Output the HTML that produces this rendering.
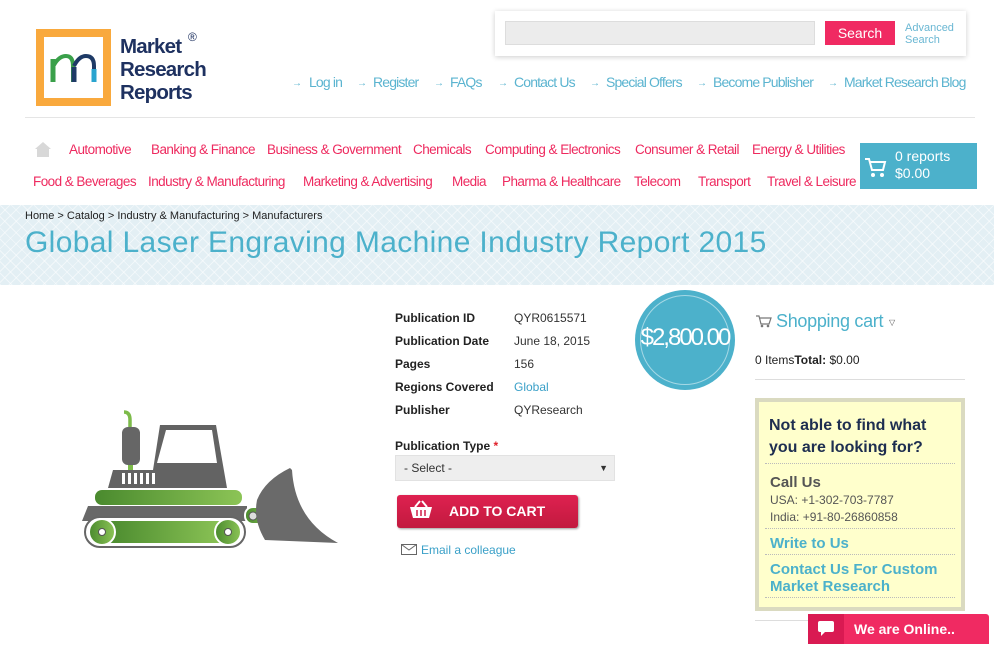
<!DOCTYPE html>
<html><head><meta charset="utf-8">
<style>
*{margin:0;padding:0;box-sizing:border-box}
body{width:994px;height:655px;overflow:hidden;background:#fff;font-family:"Liberation Sans",Arial,sans-serif;position:relative}
.a{position:absolute;white-space:nowrap}
.nav{font-size:13.5px;color:#ee2a5f;letter-spacing:-0.55px}
.tl{font-size:14px;color:#5bb4d0;letter-spacing:-0.85px}
.arr{font-size:10px;color:#5bb4d0}
.lbl{font-size:12px;font-weight:bold;color:#222}
.val{font-size:12px;color:#333}
</style></head><body>

<!-- logo -->
<div class="a" style="left:36px;top:29px;width:75px;height:77px;background:#f9a93d"></div>
<div class="a" style="left:44px;top:37px;width:59px;height:61px;background:#fff"></div>
<svg class="a" style="left:44px;top:37px" width="59" height="61" viewBox="0 0 59 61">
<path d="M9 22 V45" stroke="#3aa04a" stroke-width="5" fill="none"/>
<path d="M10 28 Q15 19 22 19 Q29 19 29 29 V45" stroke="#3aa04a" stroke-width="4" fill="none"/>
<path d="M30 29 Q35 19 42 19 Q50 19 50 29 V45" stroke="#1e3a66" stroke-width="4" fill="none"/>
<path d="M30 30 V45" stroke="#1e3a66" stroke-width="5" fill="none"/>
<path d="M50 32 V45" stroke="#2aa4cf" stroke-width="5" fill="none"/>
</svg>
<div class="a" style="left:120px;top:35px;font-size:20.5px;font-weight:900;color:#1e3160;line-height:23px;letter-spacing:-0.8px">Market<br>Research<br>Reports</div>
<div class="a" style="left:188px;top:30px;font-size:12px;color:#1e3160">®</div>

<!-- search box -->
<div class="a" style="left:495px;top:11px;width:471px;height:45px;background:#fff;box-shadow:0 1px 5px rgba(0,0,0,.2)"></div>
<div class="a" style="left:505px;top:21px;width:310px;height:24px;background:#ececec;border:1px solid #ddd"></div>
<div class="a" style="left:825px;top:21px;width:70px;height:24px;background:#f02a62;color:#fff;font-size:14px;text-align:center;line-height:24px">Search</div>
<div class="a" style="left:905px;top:22px;font-size:11px;color:#6ab7d3;line-height:12px">Advanced<br>Search</div>

<!-- top links -->
<span class="a arr" style="left:292px;top:78px">→</span><span class="a tl" style="left:309px;top:74px">Log in</span>
<span class="a arr" style="left:357px;top:78px">→</span><span class="a tl" style="left:373px;top:74px">Register</span>
<span class="a arr" style="left:434px;top:78px">→</span><span class="a tl" style="left:450px;top:74px">FAQs</span>
<span class="a arr" style="left:498px;top:78px">→</span><span class="a tl" style="left:514px;top:74px">Contact Us</span>
<span class="a arr" style="left:590px;top:78px">→</span><span class="a tl" style="left:606px;top:74px">Special Offers</span>
<span class="a arr" style="left:697px;top:78px">→</span><span class="a tl" style="left:713px;top:74px">Become Publisher</span>
<span class="a arr" style="left:828px;top:78px">→</span><span class="a tl" style="left:844px;top:74px">Market Research Blog</span>

<div class="a" style="left:25px;top:117px;width:950px;height:1px;background:#e5e5e5"></div>

<!-- home icon -->
<svg class="a" style="left:34px;top:141px" width="18" height="17"><path d="M9 1 L17 8 L15 8 L15 16 L3 16 L3 8 L1 8 Z" fill="#d8d8d8"/></svg>

<!-- nav row 1 -->
<span class="a nav" style="left:69px;top:142px">Automotive</span>
<span class="a nav" style="left:151px;top:142px">Banking &amp; Finance</span>
<span class="a nav" style="left:267px;top:142px">Business &amp; Government</span>
<span class="a nav" style="left:413px;top:142px">Chemicals</span>
<span class="a nav" style="left:485px;top:142px">Computing &amp; Electronics</span>
<span class="a nav" style="left:635px;top:142px">Consumer &amp; Retail</span>
<span class="a nav" style="left:752px;top:142px">Energy &amp; Utilities</span>
<!-- nav row 2 -->
<span class="a nav" style="left:33px;top:174px">Food &amp; Beverages</span>
<span class="a nav" style="left:148px;top:174px">Industry &amp; Manufacturing</span>
<span class="a nav" style="left:303px;top:174px">Marketing &amp; Advertising</span>
<span class="a nav" style="left:452px;top:174px">Media</span>
<span class="a nav" style="left:502px;top:174px">Pharma &amp; Healthcare</span>
<span class="a nav" style="left:634px;top:174px">Telecom</span>
<span class="a nav" style="left:698px;top:174px">Transport</span>
<span class="a nav" style="left:767px;top:174px">Travel &amp; Leisure</span>

<!-- cart box -->
<div class="a" style="left:860px;top:143px;width:117px;height:46px;background:#4cb1cb"></div>
<svg class="a" style="left:864px;top:155px" width="24" height="24"><path d="M1 4 H5 L8 15 H19 L21 7 H6" fill="none" stroke="#fff" stroke-width="2"/><circle cx="9" cy="20" r="2" fill="#fff"/><circle cx="18" cy="20" r="2" fill="#fff"/></svg>
<div class="a" style="left:895px;top:148px;color:#fff;font-size:14px;line-height:17px">0 reports<br>$0.00</div>

<!-- banner -->
<div class="a" style="left:0;top:205px;width:994px;height:80px;background-color:#e3eff4;background-image:repeating-linear-gradient(45deg,rgba(255,255,255,.5) 0 1px,transparent 1px 8px),repeating-linear-gradient(-45deg,rgba(255,255,255,.5) 0 1px,transparent 1px 8px)"></div>
<div class="a" style="left:25px;top:210px;font-size:11px;color:#222">Home &gt; Catalog &gt; Industry &amp; Manufacturing &gt; Manufacturers</div>
<div class="a" style="left:25px;top:226px;font-size:30px;color:#4cb1cb;letter-spacing:0.35px">Global Laser Engraving Machine Industry Report 2015</div>

<!-- bulldozer -->
<svg class="a" style="left:60px;top:390px" width="300" height="170" viewBox="0 0 300 170">
<defs><linearGradient id="g" x1="0" x2="1"><stop offset="0" stop-color="#4a8a2e"/><stop offset="1" stop-color="#8cc456"/></linearGradient></defs>
<path d="M64 22 Q70 22 70 30 L70 40" fill="none" stroke="#7dbb4a" stroke-width="3.5"/>
<rect x="62" y="37" width="18" height="38" rx="6" fill="#666"/>
<rect x="68" y="75" width="5" height="8" fill="#7dbb4a"/>
<path d="M53 80 L93 80 L100 35 L156 35 L167 98 L48 98 Z" fill="#636363"/>
<path d="M106 40 L152 40 L157 73 L97 73 Z" fill="#fff"/>
<g fill="#fff"><rect x="62" y="83" width="3" height="11"/><rect x="68" y="83" width="3" height="11"/><rect x="74" y="83" width="3" height="11"/><rect x="80" y="83" width="3" height="11"/><rect x="86" y="83" width="3" height="11"/><rect x="92" y="83" width="3" height="11"/></g>
<rect x="35" y="100" width="147" height="15" rx="7" fill="url(#g)"/>
<path d="M28 116 L187 116 L187 131 L22 131 Z" fill="#686868"/>
<rect x="25" y="127" width="160" height="30" rx="15" fill="#fff" stroke="#666" stroke-width="2"/>
<rect x="45" y="131" width="120" height="22" fill="url(#g)"/>
<circle cx="42" cy="142" r="13" fill="url(#g)" stroke="#fff" stroke-width="2"/><circle cx="42" cy="142" r="3.5" fill="#fff" stroke="#555"/>
<circle cx="168" cy="142" r="13" fill="url(#g)" stroke="#fff" stroke-width="2"/><circle cx="168" cy="142" r="3.5" fill="#fff" stroke="#555"/>
<rect x="185" y="117" width="30" height="17" rx="8" fill="url(#g)" stroke="#fff" stroke-width="2"/>
<circle cx="193" cy="126" r="4" fill="#ddd" stroke="#555"/><circle cx="207" cy="126" r="4" fill="#ddd" stroke="#555"/>
<path d="M230 78 L232 80 Q235 130 278 153 L205 150 Q193 130 197 110 Q205 90 230 78 Z" fill="#6a6a6a"/>
</svg>

<!-- details -->
<div class="a lbl" style="left:395px;top:311px">Publication ID</div><div class="a val" style="left:514px;top:311px">QYR0615571</div>
<div class="a lbl" style="left:395px;top:334px">Publication Date</div><div class="a val" style="left:514px;top:334px">June 18, 2015</div>
<div class="a lbl" style="left:395px;top:357px">Pages</div><div class="a val" style="left:514px;top:357px">156</div>
<div class="a lbl" style="left:395px;top:380px">Regions Covered</div><div class="a val" style="left:514px;top:380px;color:#3aa0c8">Global</div>
<div class="a lbl" style="left:395px;top:403px">Publisher</div><div class="a val" style="left:514px;top:403px">QYResearch</div>
<div class="a lbl" style="left:395px;top:439px">Publication Type <span style="color:#e0202a">*</span></div>
<div class="a" style="left:395px;top:455px;width:220px;height:26px;background:#eee;border:1px solid #e2e2e2;font-size:12px;color:#333;line-height:24px;padding-left:8px">- Select -<span style="position:absolute;right:6px;top:0;font-size:9px">▼</span></div>
<div class="a" style="left:397px;top:495px;width:181px;height:33px;background:linear-gradient(#de2150,#c21a3f);border-radius:3px;box-shadow:1px 1px 2px rgba(0,0,0,.4)"></div>
<svg class="a" style="left:408px;top:499px" width="26" height="22"><path d="M7 8 L12 2 M19 8 L14 2" stroke="#fff" stroke-width="2"/><path d="M2 8 H24 L21 19 H5 Z" fill="#fff"/><g stroke="#d01e48" stroke-width="1.5"><path d="M9 11 V17 M13 11 V17 M17 11 V17"/></g></svg>
<div class="a" style="left:449px;top:503px;font-size:14px;font-weight:bold;color:#fff">ADD TO CART</div>
<svg class="a" style="left:401px;top:544px" width="16" height="11"><rect x="0.5" y="0.5" width="15" height="10" fill="#fff" stroke="#666"/><path d="M0.5 0.5 L8 6 L15.5 0.5" fill="none" stroke="#666"/></svg>
<div class="a" style="left:421px;top:543px;font-size:12px;color:#3aa0c8">Email a colleague</div>

<!-- price circle -->
<div class="a" style="left:635px;top:290px;width:100px;height:100px;border-radius:50%;background:#4cb1cb"></div>
<div class="a" style="left:640px;top:295px;width:90px;height:90px;border-radius:50%;border:1px solid rgba(255,255,255,.5)"></div>
<div class="a" style="left:635px;top:324px;width:100px;text-align:center;color:#fff;font-size:24px;letter-spacing:-2px">$2,800.00</div>

<!-- shopping cart sidebar -->
<svg class="a" style="left:756px;top:314px" width="16" height="14"><path d="M0 2 H3 L5 10 H13 L15 4 H4" fill="none" stroke="#777" stroke-width="1.2"/><circle cx="6" cy="12" r="1.3" fill="#777"/><circle cx="12" cy="12" r="1.3" fill="#777"/></svg>
<div class="a" style="left:776px;top:311px;font-size:18px;color:#4cb1cb;letter-spacing:-0.3px">Shopping cart</div>
<div class="a" style="left:889px;top:318px;font-size:8px;color:#555">▽</div>
<div class="a" style="left:755px;top:353px;font-size:12px;color:#222">0 Items<b>Total:</b> $0.00</div>
<div class="a" style="left:755px;top:379px;width:210px;height:1px;background:#ddd"></div>

<div class="a" style="left:755px;top:398px;width:210px;height:213px;background:#ffffcc;border:4px solid #dadac0"></div>
<div class="a" style="left:769px;top:415px;font-size:16px;font-weight:bold;color:#1e2e50;line-height:22px">Not able to find what<br>you are looking for?</div>
<div class="a" style="left:765px;top:463px;width:190px;border-top:1px dotted #bbb"></div>
<div class="a" style="left:770px;top:474px;font-size:15px;font-weight:bold;color:#555">Call Us</div>
<div class="a" style="left:770px;top:492px;font-size:12px;color:#555;line-height:17px">USA: +1-302-703-7787<br>India: +91-80-26860858</div>
<div class="a" style="left:765px;top:528px;width:190px;border-top:1px dotted #bbb"></div>
<div class="a" style="left:770px;top:535px;font-size:15px;font-weight:bold;color:#4cb1cb">Write to Us</div>
<div class="a" style="left:765px;top:554px;width:190px;border-top:1px dotted #bbb"></div>
<div class="a" style="left:770px;top:561px;font-size:15px;font-weight:bold;color:#4cb1cb;line-height:17px">Contact Us For Custom<br>Market Research</div>
<div class="a" style="left:765px;top:597px;width:190px;border-top:1px dotted #bbb"></div>
<div class="a" style="left:755px;top:620px;width:210px;height:1px;background:#ddd"></div>

<!-- online chat -->
<div class="a" style="left:808px;top:614px;width:181px;height:30px;background:#f02a62;border-radius:3px 3px 0 0"></div>
<div class="a" style="left:808px;top:614px;width:36px;height:30px;background:#d91a52"></div>
<svg class="a" style="left:817px;top:620px" width="18" height="18"><path d="M3 1 H15 Q17 1 17 3 V10 Q17 12 15 12 H8 L4 16 V12 H3 Q1 12 1 10 V3 Q1 1 3 1 Z" fill="#fff"/></svg>
<div class="a" style="left:854px;top:621px;font-size:14px;font-weight:bold;color:#fff">We are Online..</div>

</body></html>
